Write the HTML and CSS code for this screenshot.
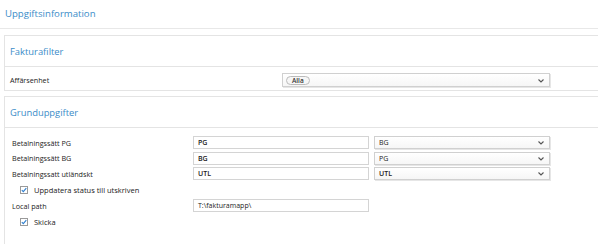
FILE: index.html
```html
<!DOCTYPE html>
<html lang="sv">

<head>
  <meta charset="UTF-8">
  <title>Uppgiftsinformation</title>
  <link rel="stylesheet" href="styles.css">
</head>

<body>
  <h1 class="page-title">Uppgiftsinformation</h1>

  <!-- Fakturafilter -->
  <section class="panel">
    <h2 class="panel-head">Fakturafilter</h2>
    <div class="panel-body filter-body">
      <div class="row filter-row">
        <span class="label">Affärsenhet</span>
        <div class="select wide">
          <span class="tag">Alla</span>
          <svg class="chev" width="6" height="4" viewBox="0 0 6 4"><path d="M0.5 0.5 L3 3 L5.5 0.5" fill="none" stroke="#555" stroke-width="1.1"/></svg>
        </div>
      </div>
    </div>
  </section>

  <!-- Grunduppgifter -->
  <section class="panel">
    <h2 class="panel-head">Grunduppgifter</h2>
    <div class="panel-body form-body">
      <div class="row">
        <span class="label">Betalningssätt PG</span>
        <div class="input strong">PG</div>
        <div class="select">BG
          <svg class="chev" width="6" height="4" viewBox="0 0 6 4"><path d="M0.5 0.5 L3 3 L5.5 0.5" fill="none" stroke="#555" stroke-width="1.1"/></svg>
        </div>
      </div>
      <div class="row">
        <span class="label">Betalningssätt BG</span>
        <div class="input strong">BG</div>
        <div class="select">PG
          <svg class="chev" width="6" height="4" viewBox="0 0 6 4"><path d="M0.5 0.5 L3 3 L5.5 0.5" fill="none" stroke="#555" stroke-width="1.1"/></svg>
        </div>
      </div>
      <div class="row">
        <span class="label">Betalningssatt utländskt</span>
        <div class="input strong">UTL</div>
        <div class="select strong">UTL
          <svg class="chev" width="6" height="4" viewBox="0 0 6 4"><path d="M0.5 0.5 L3 3 L5.5 0.5" fill="none" stroke="#555" stroke-width="1.1"/></svg>
        </div>
      </div>
      <label class="check-row">
        <svg class="check" width="8" height="8" viewBox="0 0 8 8"><rect x="0.5" y="0.5" width="7" height="7" fill="#fff" stroke="#9a9a9a"/><path d="M1.8 4.2 L3.3 5.7 L6.3 2.2" fill="none" stroke="#2d7fd0" stroke-width="1.1"/></svg>
        Uppdatera status till utskriven
      </label>
      <div class="row">
        <span class="label">Local path</span>
        <div class="input">T:\fakturamapp\</div>
      </div>
      <label class="check-row">
        <svg class="check" width="8" height="8" viewBox="0 0 8 8"><rect x="0.5" y="0.5" width="7" height="7" fill="#fff" stroke="#9a9a9a"/><path d="M1.8 4.2 L3.3 5.7 L6.3 2.2" fill="none" stroke="#2d7fd0" stroke-width="1.1"/></svg>
        Skicka
      </label>
    </div>
  </section>
</body>

</html>
```

FILE: styles.css
```css
body {
  margin: 0;
  height: 244px;
  overflow: hidden;
  background-color: #ffffff;
  color: #222222;
  font-family: "Open Sans", "Noto Sans", sans-serif;
}

.page-title {
  margin: 0;
  height: 28px;
  line-height: 28px;
  padding-left: 5px;
  font-size: 9.6px;
  font-weight: normal;
  color: #3a8cc8;
  border-bottom: 1px solid #e8e8e8;
}

/* PANELER */
.panel {
  margin: 6px -20px 0 4px;
  border: 1px solid #e4e4e4;
}

.panel + .panel {
  box-sizing: border-box;
  margin-top: 5px;
  border-bottom: none;
  height: 148px;
}

.panel-head {
  margin: 0;
  height: 30px;
  line-height: 31px;
  padding-left: 5px;
  font-size: 9.4px;
  font-weight: normal;
  color: #3a8cc8;
  border-bottom: 1px solid #e4e4e4;
}

.filter-body {
  padding: 6px 0 3px 5px;
}

.form-body {
  padding: 8px 0 0 7px;
  display: flex;
  flex-direction: column;
  gap: 2.5px;
}

.row {
  display: flex;
  align-items: center;
  height: 13px;
}

.label {
  width: 181px;
  font-size: 7.2px;
  color: #222;
}

.filter-row {
  height: 14px;
}

.filter-row .label {
  width: 272px;
}

.input,
.select {
  box-sizing: border-box;
  width: 176px;
  height: 13px;
  line-height: 11px;
  padding-left: 4px;
  font-size: 7px;
  color: #222;
  border: 1px solid #d4d4d4;
  background-color: #fff;
}

.select {
  position: relative;
  margin-left: 5px;
  background: linear-gradient(#ffffff, #f6f6f6);
  border-color: #d0d0d0;
  box-shadow: 1px 1px 0 #e6e6e6;
}

.select.wide {
  width: 268px;
  height: 14px;
  margin-left: 0;
  padding-left: 3px;
  display: flex;
  align-items: center;
}

.strong {
  font-weight: 600;
}

.chev {
  position: absolute;
  right: 5px;
  top: 4px;
}

.select.wide .chev {
  top: 4.5px;
}

.tag {
  box-sizing: border-box;
  height: 9px;
  line-height: 7px;
  padding: 0 5px;
  font-size: 6.5px;
  font-weight: 600;
  color: #333;
  border: 1px solid #bbb;
  border-radius: 5px;
  background-color: #f6f6f6;
}

.check-row {
  display: flex;
  align-items: center;
  gap: 6px;
  height: 14px;
  padding-left: 8px;
  font-size: 7.5px;
  color: #222;
}
```
